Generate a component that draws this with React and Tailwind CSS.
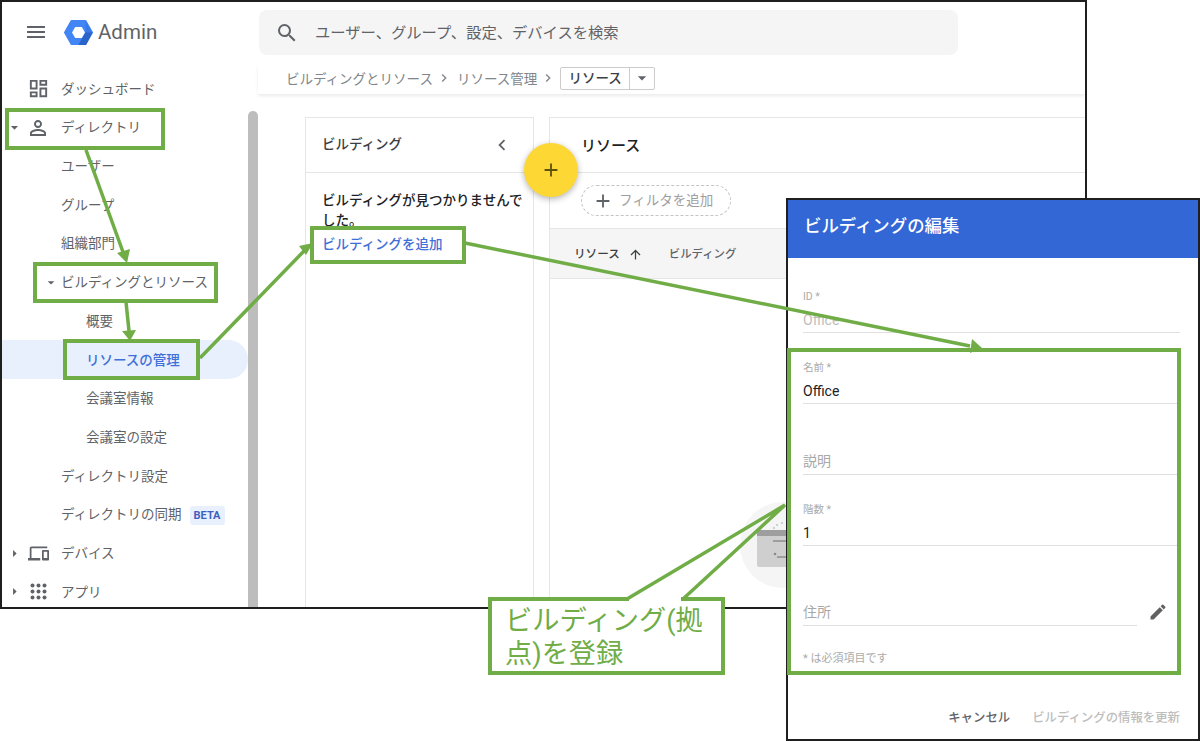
import React from "react";
import { MdMenu, MdSearch, MdOutlineDashboard, MdPersonOutline, MdOutlineDevices, MdAdd, MdArrowUpward, MdEdit, MdChevronLeft, MdChevronRight, MdArrowDropDown, MdArrowRight } from "react-icons/md";

const Logo = () => (
  <svg width="29" height="27" viewBox="0 0 29 27">
    <path d="M1 13.5 7.5 2h14L28 13.5 21.5 25h-14z" fill="#4285f4" stroke="#4285f4" strokeWidth="2" strokeLinejoin="round" />
    <path d="M21.5 2 28 13.5 21.5 25h-7l7-11.5z" fill="#3b78e7" />
    <path d="M28.5 13.5 22 26h-7.5l7-12.5z" fill="#2b64c9" />
    <path d="M8 13.5 11.2 8h6.6l3.2 5.5-3.2 5.5h-6.6z" fill="#fff" />
  </svg>
);

const AppsIcon = () => (
  <svg width="17" height="17" viewBox="0 0 17 17" fill="#5f6368">
    {[2.5, 8.5, 14.5].map((y) => [2.5, 8.5, 14.5].map((x) => <circle key={`${x}-${y}`} cx={x} cy={y} r="2" />))}
  </svg>
);

function NavRow({ label, icon, caret, pl = "pl-[59px]", active, badge }) {
  return (
    <div className={`flex h-[38.7px] items-center whitespace-nowrap rounded-r-full ${pl} ${active ? "bg-[#e8f0fe] font-medium text-[#3f6fd8]" : "text-[#5f6368]"}`}>
      {caret}
      {icon}
      <span>{label}</span>
      {badge && <span className="ml-2 mt-[3px] rounded-[3px] bg-[#e8f0fe] px-[4px] py-[2px] text-[11px] font-bold leading-[15px] text-[#3f5fc0]">{badge}</span>}
    </div>
  );
}

const Slot = ({ children, w }) => <span className={`flex shrink-0 items-center justify-center ${w}`}>{children}</span>;

function Field({ label, value, dim, ph, narrow, h = "h-[71px]" }) {
  return (
    <div className={`flex flex-col justify-end ${h}`}>
      <div className="flex items-end">
        <div className={`border-b border-[#e0e0e0] ${narrow ? "w-[334px]" : "w-[377px]"}`}>
          {label && <div className="text-[10.5px] leading-[14px] text-[#ababab]">{label}</div>}
          <div className={`text-[14px] leading-[20px] ${label ? "mt-[6px] pb-[2px]" : "pb-[3px]"} ${dim ? "text-[#bdbdbd]" : ph ? "text-[#a8a8a8]" : "text-[#202124]"}`}>{value}</div>
        </div>
        {narrow && <MdEdit className="mb-[4px] ml-[11px] text-[#616161]" size={20} />}
      </div>
    </div>
  );
}

export default function App() {
  const font = { fontFamily: 'Roboto, "Noto Sans CJK JP", sans-serif' };
  return (
    <div className="relative h-[741px] w-[1200px] overflow-hidden bg-white text-[13.5px]" style={font}>
      {/* browser window */}
      <div className="flex h-[609px] w-[1087px] overflow-hidden border-2 border-[#1f1f1f] bg-white">
        <aside className="w-[256px] shrink-0">
          <div className="flex h-[60px] items-center pl-[22px]">
            <MdMenu size={24} className="text-[#5f6368]" />
            <span className="ml-[16px] flex"><Logo /></span>
            <span className="ml-[5px] text-[20.5px] text-[#5f6368]">Admin</span>
          </div>
          <div className="flex h-[547px] pt-[7.5px]">
            <nav className="w-[246px] shrink-0">
              <NavRow label="ダッシュボード" pl="pl-[23px]" icon={<Slot w="w-[26px] mr-[10px]"><MdOutlineDashboard size={23} /></Slot>} />
              <NavRow label="ディレクトリ" pl="pl-[3px]" caret={<Slot w="w-[18px] mr-[2px]"><MdArrowDropDown size={17} /></Slot>} icon={<Slot w="w-[26px] mr-[10px]"><MdPersonOutline size={24} /></Slot>} />
              <NavRow label="ユーザー" />
              <NavRow label="グループ" />
              <NavRow label="組織部門" />
              <NavRow label="ビルディングとリソース" pl="pl-[41px]" caret={<Slot w="w-[16px] mr-[2px]"><MdArrowDropDown size={17} /></Slot>} />
              <NavRow label="概要" pl="pl-[84px]" />
              <NavRow label="リソースの管理" pl="pl-[84px]" active />
              <NavRow label="会議室情報" pl="pl-[84px]" />
              <NavRow label="会議室の設定" pl="pl-[84px]" />
              <NavRow label="ディレクトリ設定" />
              <NavRow label="ディレクトリの同期" badge="BETA" />
              <NavRow label="デバイス" pl="pl-[3px]" caret={<Slot w="w-[18px] mr-[2px]"><MdArrowRight size={17} /></Slot>} icon={<Slot w="w-[26px] mr-[10px]"><MdOutlineDevices size={21} /></Slot>} />
              <NavRow label="アプリ" pl="pl-[3px]" caret={<Slot w="w-[18px] mr-[2px]"><MdArrowRight size={17} /></Slot>} icon={<Slot w="w-[26px] mr-[10px]"><AppsIcon /></Slot>} />
            </nav>
            <div className="mt-[41.5px] w-[10px] rounded-t-full bg-[#bdbdbd]" />
          </div>
        </aside>
        <main className="min-w-0 flex-1">
          <div className="ml-[1px] mt-[8px] flex h-[45px] w-[699px] items-center rounded-lg bg-[#f5f5f5] pl-[16px] text-[15.3px] text-[#5f6368]">
            <MdSearch size={24} className="mr-[16px]" />
            <span className="pt-[1px]">ユーザー、グループ、設定、デバイスを検索</span>
          </div>
          <div className="mt-[9px] flex h-[30px] items-center pb-[2px] pl-[28px] text-[#80868b] shadow-[0_2px_3px_rgba(0,0,0,0.08)]">
            <span className="pt-[3px]">ビルディングとリソース</span>
            <MdChevronRight size={16} className="ml-[3px] mr-[5px]" />
            <span className="pt-[3px]">リソース管理</span>
            <MdChevronRight size={16} className="ml-[3px] mr-[4px]" />
            <div className="flex h-[23px] w-[95px] items-center rounded-[2px] border border-[#cccccc] text-[#3c4043]">
              <span className="w-[69px] border-r border-[#cccccc] text-center font-medium leading-[21px]">リソース</span>
              <MdArrowDropDown size={20} className="ml-[2px] text-[#5f6368]" />
            </div>
          </div>
          <div className="flex gap-[15px] pl-[47px] pt-[23px]">
            <section className="h-[520px] w-[229px] shrink-0 border border-[#e6e6e6]">
              <div className="flex h-[55px] items-center justify-between border-b border-[#e6e6e6] pl-[16px] pr-[20px] font-medium text-[#3c4043]">
                <span className="pb-[2px]">ビルディング</span>
                <MdChevronLeft size={22} className="text-[#5f6368]" />
              </div>
              <div className="pl-[16px] pr-[6px] pt-[17px] leading-[20px]">
                <p className="font-medium text-[#202124]">ビルディングが見つかりませんでした。</p>
                <p className="mt-[4px] font-medium text-[#3f6fd8]">ビルディングを追加</p>
              </div>
            </section>
            <section className="h-[520px] min-w-0 flex-1 border-y border-l border-[#e6e6e6]">
              <div className="flex h-[55px] items-center border-b border-[#e6e6e6] pl-[31px] pt-[2px] text-[15px] font-medium text-[#202124]">リソース</div>
              <div className="flex h-[55px] items-center pl-[31px]">
                <div className="flex h-[31px] w-[150px] items-center rounded-full border border-dashed border-[#c4c4c4] pl-[10px] text-[#9e9e9e]">
                  <MdAdd size={22} className="mr-[5px] text-[#5f6368]" />
                  <span>フィルタを追加</span>
                </div>
              </div>
              <div className="flex h-[51px] items-center border-y border-[#e6e6e6] bg-[#f5f5f5] pl-[24px] pt-[2px] font-medium text-[#3c4043]">
                <span className="text-[11.6px]">リソース</span>
                <MdArrowUpward size={15} className="ml-[8px] mr-[26px]" />
                <span className="text-[11.4px] text-[#5f6368]">ビルディング</span>
              </div>
              <div className="ml-[190px] mt-[223px] flex h-[86px] w-[86px] items-center justify-center rounded-full bg-[#f5f5f5]">
                <svg width="52" height="46" viewBox="0 0 52 46">
                  <rect x="0" y="8" width="52" height="37" rx="2" fill="#cfcfcf" />
                  <path d="M0 14v-4a2 2 0 0 1 2-2h48a2 2 0 0 1 2 2v4z" fill="#9e9e9e" />
                  <path d="M16 19h20M20 35h14" stroke="#9e9e9e" strokeWidth="2" />
                  <circle cx="18" cy="32" r="1.3" fill="#8a8a8a" />
                  <circle cx="17" cy="6" r="0.9" fill="#bdbdbd" />
                  <circle cx="20" cy="3" r="0.9" fill="#bdbdbd" />
                  <circle cx="25" cy="1" r="0.9" fill="#bdbdbd" />
                </svg>
              </div>
            </section>
          </div>
        </main>
      </div>

      {/* floating add button */}
      <div className="absolute left-[524px] top-[143px] flex h-[54px] w-[54px] items-center justify-center rounded-full bg-[#fdd835] text-[#5f5210] shadow-[0_2px_6px_rgba(0,0,0,0.3)]">
        <MdAdd size={22} />
      </div>

      {/* dialog */}
      <div className="absolute left-[786px] top-[198px] flex h-[543px] w-[414px] flex-col border-2 border-[#1f1f1f] bg-white">
        <div className="flex h-[58px] shrink-0 items-center bg-[#3367d6] pb-[6px] pl-[16px] text-[17.4px] font-medium text-white">ビルディングの編集</div>
        <div className="h-[425px] shrink-0 pl-[15px] pt-[4px]">
          <Field label="ID *" value="Office" dim />
          <Field label="名前 *" value="Office" />
          <Field value="説明" ph />
          <Field label="階数 *" value="1" />
          <Field value="住所" ph narrow h="h-[80px]" />
          <p className="mt-[25px] text-[11px] leading-[16px] text-[#ababab]">* は必須項目です</p>
        </div>
        <div className="flex h-[44px] shrink-0 justify-end gap-[22px] pr-[18px] pt-[26px] text-[12.4px] font-medium leading-[18px]">
          <span className="text-[#5f6368]">キャンセル</span>
          <span className="text-[#bdbdbd]">ビルディングの情報を更新</span>
        </div>
      </div>

      {/* annotations */}
      <svg className="pointer-events-none absolute left-0 top-0" width="1200" height="741">
        <g stroke="#70ad47" strokeWidth="3.5" fill="#70ad47">
          <line x1="86" y1="150" x2="123" y2="252" />
          <path d="M117 253 130 249 127 263z" stroke="none" />
          <line x1="126" y1="302" x2="129" y2="331" />
          <path d="M122 331 136 330 130 341z" stroke="none" />
          <line x1="200" y1="358" x2="304" y2="251" />
          <path d="M299 246 306 255 313 243z" stroke="none" />
          <line x1="465" y1="243" x2="970" y2="346" />
          <path d="M972 339 970 353 982 348z" stroke="none" />
        </g>
        <path d="M627 599 785 505 683 599" fill="none" stroke="#70ad47" strokeWidth="3.5" />
      </svg>
      <div className="absolute left-[5px] top-[108px] h-[42px] w-[160px] border-4 border-[#70ad47]" />
      <div className="absolute left-[33px] top-[262px] h-[41px] w-[185px] border-4 border-[#70ad47]" />
      <div className="absolute left-[63px] top-[339px] h-[41px] w-[137px] border-4 border-[#70ad47]" />
      <div className="absolute left-[310px] top-[226px] h-[38px] w-[156px] border-4 border-[#70ad47]" />
      <div className="absolute left-[787px] top-[348px] h-[327px] w-[394px] border-4 border-[#70ad47]" />
      <div className="absolute left-[488px] top-[601px] h-[74px] w-[237px] border-4 border-t-0 border-[#70ad47] bg-white pl-[13px] pr-[4px] pt-[4px] text-[27.2px] leading-[33px] text-[#70ad47]">
        ビルディング(拠点)を登録
      </div>
      <div className="absolute left-[488px] top-[597px] h-[4px] w-[141px] bg-[#70ad47]" />
      <div className="absolute left-[681px] top-[597px] h-[4px] w-[44px] bg-[#70ad47]" />
    </div>
  );
}
